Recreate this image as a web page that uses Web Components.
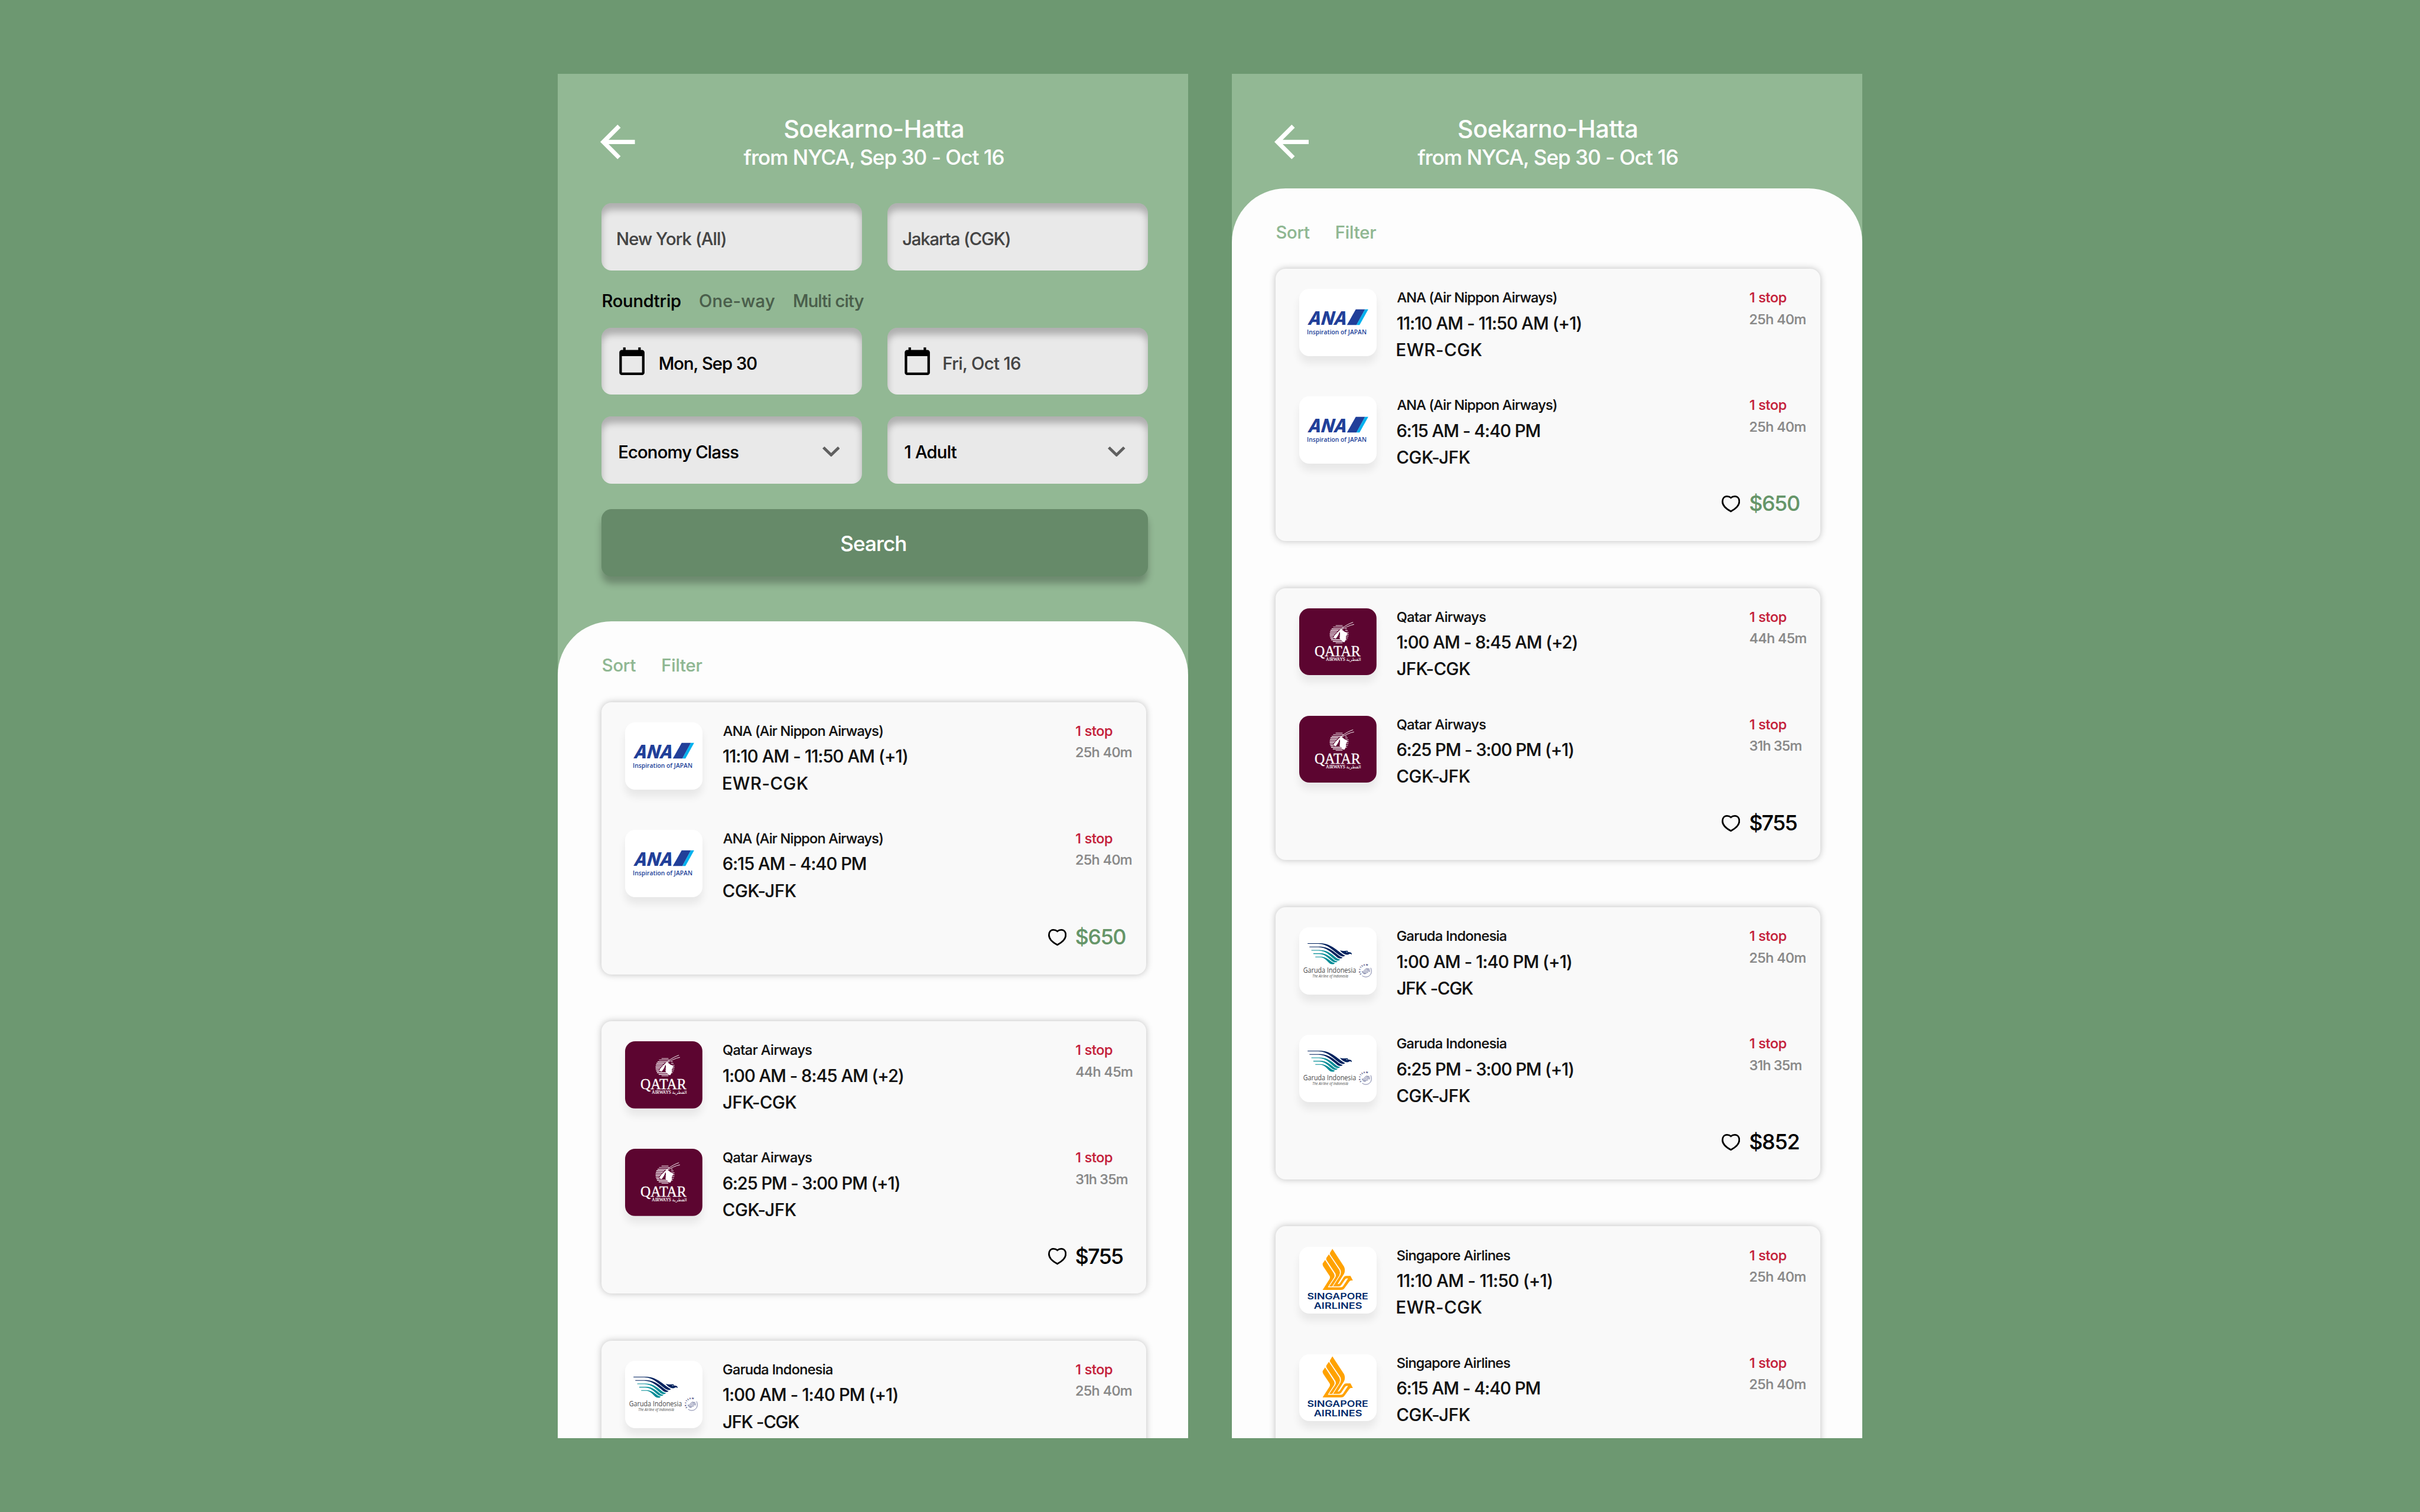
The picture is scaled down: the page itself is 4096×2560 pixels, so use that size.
<!DOCTYPE html>
<html lang="en">
<head>
<meta charset="utf-8">
<title>Flight search</title>
<style>
  :root { --u: calc(100vw / 1440); }
  html, body { margin: 0; height: 100%; }
  body {
    background: #6d9871;
    font-family: Inter, "Liberation Sans", sans-serif;
    font-weight: 500;
    display: flex; align-items: center; justify-content: center;
    gap: calc(var(--u) * 26);
    height: 100vh; overflow: hidden;
  }
</style>
</head>
<body>
<phone-screen>
  <top-bar></top-bar>
  <search-form></search-form>
  <results-sheet count="3" last-legs="1"></results-sheet>
</phone-screen>
<phone-screen>
  <top-bar></top-bar>
  <results-sheet count="4" last-legs="2"></results-sheet>
</phone-screen>

<script>
// Lengths written as "12u" are design units: 1/1440 of the window's width.
const U = window.innerWidth / 1440;
const css = s => '<style>' + s.replace(/(-?[\d.]+)u\b/g, 'calc(var(--u) * $1)') + '</style>';
class Base extends HTMLElement {
  connectedCallback() {
    if (this.shadowRoot) return;
    this.attachShadow({ mode: 'open' }).innerHTML = this.render();
  }
}
const pen = document.createElement('canvas').getContext('2d');

// One line of text: s = font size, w = inked width, b = baseline from the top, h = box height.
customElements.define('fit-text', class extends Base {
  render() {
    const s = +this.getAttribute('s'), w = +this.getAttribute('w'), b = +this.getAttribute('b');
    const h = this.getAttribute('h') || b;
    const t = this.textContent;
    pen.font = '500 100px Inter, "Liberation Sans", sans-serif';
    const m = pen.measureText(t), k = s * U / 100;
    const ink = (m.actualBoundingBoxLeft + m.actualBoundingBoxRight) * k;
    const ls = (w * U - ink) / (t.length - 1);
    return css(`:host{display:block;width:${w}u;height:${h}u;flex:none;font-size:${s}u;
      line-height:${(2 * (b - 0.3636 * s)).toFixed(3)}u;white-space:nowrap;
      letter-spacing:${ls.toFixed(3)}px;-webkit-text-stroke:.07u currentColor}
      span{margin-left:${(m.actualBoundingBoxLeft * k + 0.1 * U).toFixed(2)}px}`) + '<span><slot></slot></span>';
  }
});

customElements.define('phone-screen', class extends Base {
  render() {
    return css(`:host{display:flex;flex-direction:column;width:375u;height:812u;background:#92b894;overflow:hidden}`) + '<slot></slot>';
  }
});

customElements.define('top-bar', class extends Base {
  render() {
    return css(`:host{display:flex;height:68u;flex:none;color:#fdfdfd}
      svg{width:20.6u;height:20.6u;margin:30.2u 0 0 25.2u;flex:none}
      .t{display:flex;flex-direction:column;align-items:center;width:155u;margin-left:64.6u}`) +
      `<svg viewBox="4 4 16 16" fill="#fff"><path d="M20 11H7.83l5.59-5.59L12 4l-8 8 8 8 1.41-1.41L7.83 13H20v-2z"/></svg>
      <div class="t"><fit-text s="14.4" w="105.9" b="38.2" h="40">Soekarno-Hatta</fit-text>
      <fit-text s="12.3" w="154.9" b="14" h="16">from NYCA, Sep 30 - Oct 16</fit-text></div>`;
  }
});

customElements.define('field-box', class extends Base {
  render() {
    const k = this.getAttribute('kind');
    const cal = '<svg class="cal" viewBox="0 0 24 24"><path d="M20 3h-1V1h-2v2H7V1H5v2H4c-1.1 0-2 .9-2 2v16c0 1.1.9 2 2 2h16c1.1 0 2-.9 2-2V5c0-1.1-.9-2-2-2zm0 18H4V8h16v13z"/></svg>';
    const chev = '<svg class="chev" viewBox="6 8.59 12 7.41" preserveAspectRatio="none"><path fill="#606060" d="M16.59 8.59L12 13.17 7.41 8.59 6 10l6 6 6-6z"/></svg>';
    return css(`:host{display:flex;box-sizing:border-box;width:155u;height:40u;border-radius:6u;background:#e9e9e9;
        box-shadow:inset 0 4u 4u rgba(0,0,0,.25);padding-left:${this.getAttribute('pad')}u;color:#000}
      :host([muted]){color:#444}
      .cal{width:18u;height:18u;margin:11.1u ${this.getAttribute('gap') || 0}u 0 0;flex:none}
      .chev{width:10.4u;height:6.2u;margin:17.7u 13.3u 0 auto;flex:none}`) +
      (k === 'date' ? cal : '') + '<slot></slot>' + (k === 'select' ? chev : '');
  }
});

customElements.define('search-form', class extends Base {
  render() {
    return css(`:host{display:block;padding:9u 24u 27u 26u;flex:none}
      .row{display:flex;gap:15u}
      .row+.row{margin-top:13u}
      .tabs{display:flex;height:34u;padding-left:.8u;color:#4a5e4b}
      .tabs fit-text:first-child{color:#000;margin-right:11.4u}
      .tabs fit-text:nth-child(2){margin-right:11.6u}
      .go{display:flex;height:40u;margin-top:15u;border-radius:6u;background:#668a69;
        color:#fff;box-shadow:0 4u 4u rgba(0,0,0,.25);padding-left:142.5u;box-sizing:border-box}`) + `
      <div class="row">
        <field-box pad="9.4" muted><fit-text s="10.25" w="64.2" b="25.1">New York (All)</fit-text></field-box>
        <field-box pad="9.2" muted><fit-text s="10.25" w="63.5" b="25.1">Jakarta (CGK)</fit-text></field-box>
      </div>
      <div class="tabs"><fit-text s="10.25" w="46.1" b="22.1">Roundtrip</fit-text><fit-text s="10.25" w="44.6" b="22.1">One-way</fit-text><fit-text s="10.25" w="41.4" b="22.1">Multi city</fit-text></div>
      <div class="row">
        <field-box kind="date" pad="9" gap="7.6"><fit-text s="10.25" w="57.7" b="25.1">Mon, Sep 30</fit-text></field-box>
        <field-box kind="date" pad="8.9" gap="6.7" muted><fit-text s="10.25" w="45.6" b="25.1">Fri, Oct 16</fit-text></field-box>
      </div>
      <div class="row">
        <field-box kind="select" pad="10.5"><fit-text s="10.25" w="70.8" b="25.1">Economy Class</fit-text></field-box>
        <field-box kind="select" pad="10.4"><fit-text s="10.25" w="30.8" b="25.1">1 Adult</fit-text></field-box>
      </div>
      <div class="go"><fit-text s="12.3" w="38.3" b="25">Search</fit-text></div>`;
  }
});

const LOGOS = {
  ana: `<svg viewBox="54 60 552 480"><g fill="#213f99">
      <text transform="translate(111 318) skewX(-16)" font-family="Inter" font-weight="800" font-size="133" textLength="275" lengthAdjust="spacingAndGlyphs">ANA</text>
      <path d="M395 318L458 207H524L463 318z"/>
      <text x="109" y="386" font-family="Open Sans" font-weight="600" font-size="47" textLength="426" lengthAdjust="spacingAndGlyphs">Inspiration of JAPAN</text></g>
      <path fill="#00b1ee" d="M463 318L524 207H547L485 318z"/></svg>`,
  qatar: `<svg viewBox="54 60 552 480"><rect x="54" y="60" width="552" height="480" fill="#5c0530"/>
      <g stroke="#fff" stroke-width="6" stroke-linecap="round">
      <path stroke-width="4" d="M316 183H362M298 194H370"/><path d="M288 206H358M280 217H346M276 229H336M274 240H326M274 251H312M275 262H300M279 273H296M284 285H364M296 296H368"/><path stroke-width="4" d="M316 307H362"/>
      <path stroke-width="4" d="M384 206H392M384 218H398M378 232H405M378 245H406M372 258H404M372 271H400M372 284H394"/></g>
      <path fill="#5c0530" d="M294 262L336 214L352 214L340 268L318 278z"/>
      <path fill="#fff" d="M343 217C352 208 362 212 372 222C384 232 396 236 402 243C388 252 386 262 388 278C386 290 380 297 374 304C364 292 350 290 342 272C346 254 350 240 338 232L346 246C344 262 328 262 318 274C312 279 304 275 298 268C308 246 330 230 343 217z"/>
      <path fill="#5c0530" d="M341 228C350 240 345 254 334 263C326 268 322 272 318 276C324 262 338 250 341 228z"/>
      <path fill="none" stroke="#fff" stroke-width="4" stroke-linecap="round" d="M318 244C350 206 390 176 437 160M352 214C385 196 415 180 444 175"/>
      <g fill="#fff" font-family="Liberation Serif">
      <text x="164" y="401" font-size="103" stroke="#fff" stroke-width="1.5" textLength="328" lengthAdjust="spacingAndGlyphs">QATAR</text>
      <text x="245" y="436" font-size="34" stroke="#fff" stroke-width=".7" textLength="138" lengthAdjust="spacingAndGlyphs">AIRWAYS</text>
      <text x="389" y="434" font-family="DejaVu Sans" font-size="30" textLength="107" lengthAdjust="spacingAndGlyphs">القطرية</text></g></svg>`,
  garuda: `<svg viewBox="36 54 552 480"><g fill="#02235f">
      <path d="M96 168H178C262 168 296 214 350 249L364 257C356 265 343 265 328 257C272 218 240 174 172 172.500H96z"/>
      <path d="M109 192H178C256 192 292 238 330 264L346 270C338 279 323 279 309 270C262 232 232 198 172 196.500H109z"/>
      <path d="M326 217C340 224 360 223 382 222L385 231C405 231 413 237 411 249C406 244 400 243 394 245C384 252 372 251 360 246C345 238 336 232 326 217z"/></g>
      <path fill="#fff" d="M370 228L383 231L374 234z"/>
      <g fill="#008c96">
      <path d="M123 216H180C245 216 278 256 312 280L328 285C320 294 305 294 291 286C250 252 228 222 175 220.500H123z"/>
      <path d="M137 240H184C237 240 262 273 293 293L310 298C302 307 286 306 274 299C240 272 222 246 180 244.500H137z"/>
      <path d="M151 264H188C226 264 248 288 275 305L291 310C283 320 267 320 254 312C228 290 216 270 186 268.500H151z"/></g>
      <text x="64" y="380" fill="#484848" font-family="Open Sans" font-weight="500" font-size="52" textLength="378" lengthAdjust="spacingAndGlyphs">Garuda Indonesia</text>
      <text x="130" y="414" fill="#484848" font-family="Open Sans" font-style="italic" font-weight="500" font-size="31" textLength="256" lengthAdjust="spacingAndGlyphs">The Airline of Indonesia</text>
      <g fill="none" stroke="#1d2766" stroke-width="3" stroke-linecap="round">
      <path d="M547 345C563 378 542 408 513 409C503 409 494 406 487 401" stroke-width="2.5"/>
      <path d="M484 371C500 374 502 356 514 350C522 347 528 354 536 351M488 378C506 380 506 362 518 358C526 355 532 363 540 360M494 385C510 384 510 370 522 367C530 365 534 371 541 369M502 387C514 386 516 377 526 376"/></g>
      <path id="arc" fill="none" d="M481 389A38 38 0 1 1 545 349"/>
      <text fill="#1d2766" font-family="Inter" font-weight="700" font-size="15"><textPath href="#arc" textLength="100" lengthAdjust="spacing">SKYTEAM</textPath></text></svg>`,
  singapore: `<svg viewBox="36 54 552 480"><g fill="#ffa200">
      <path d="M273 69L256 96Q253 104 258 111L329 215Q338 235 330 255L278 337H318Q330 337 337 326L362 289Q368 280 376 280H385L350 333Q344 343 334 343H240L286 272Q292 260 284 245L221 148L204 172Q201 183 208 194L253 262Q259 272 253 284L203 362H335Q352 362 361 347L394 302Q399 294 406 294H419L402 262H372Q360 262 353 272L327 312Q322 322 310 321L356 247Q368 220 356 195z"/>
      <path d="M248 108L230 133Q227 143 231 149L295 246Q300 260 294 271L250 337H272L323 258Q331 240 324 222z"/></g>
      <g fill="#002a6c" font-family="Inter" font-weight="600" font-size="62">
      <text x="93" y="429" textLength="436" lengthAdjust="spacingAndGlyphs">SINGAPORE</text>
      <text x="140" y="497" textLength="346" lengthAdjust="spacingAndGlyphs">AIRLINES</text></g></svg>`
};

customElements.define('airline-logo', class extends Base {
  render() {
    return css(`:host{display:block;width:46u;height:40u;flex:none;border-radius:6u;background:#fff;box-shadow:0 4u 5u rgba(0,0,0,.07)}
      svg{display:block;width:100%;height:100%;border-radius:6u}`) + LOGOS[this.getAttribute('name')];
  }
});

const FLIGHTS = [
  { logo: 'ana', name: ['ANA (Air Nippon Airways)', 94.8], price: ['$650', 29.3], deal: true, legs: [
    [['11:10 AM - 11:50 AM (+1)', 109.3], ['EWR-CGK', 50.4], ['25h 40m', 33]],
    [['6:15 AM - 4:40 PM', 84.8], ['CGK-JFK', 43.4], ['25h 40m', 33]]] },
  { logo: 'qatar', name: ['Qatar Airways', 52.7], price: ['$755', 27.7], legs: [
    [['1:00 AM - 8:45 AM (+2)', 106.9], ['JFK-CGK', 43.5], ['44h 45m', 33.4]],
    [['6:25 PM - 3:00 PM (+1)', 104.6], ['CGK-JFK', 43.4], ['31h 35m', 30.5]]] },
  { logo: 'garuda', name: ['Garuda Indonesia', 64.9], price: ['$852', 29], legs: [
    [['1:00 AM - 1:40 PM (+1)', 103.5], ['JFK -CGK', 45.2], ['25h 40m', 33]],
    [['6:25 PM - 3:00 PM (+1)', 104.6], ['CGK-JFK', 43.4], ['31h 35m', 30.5]]] },
  { logo: 'singapore', name: ['Singapore Airlines', 67.2], legs: [
    [['11:10 AM - 11:50 (+1)', 91.9], ['EWR-CGK', 50.4], ['25h 40m', 33]],
    [['6:15 AM - 4:40 PM', 84.8], ['CGK-JFK', 43.4], ['25h 40m', 33]]] }
];
const line = ([t, w], s, b, h, c = '') => `<fit-text class="${c}" s="${s}" w="${w}" b="${b}" h="${h}">${t}</fit-text>`;

customElements.define('flight-leg', class extends Base {
  render() {
    const f = FLIGHTS[this.getAttribute('flight')], [time, route, dur] = f.legs[this.getAttribute('leg')];
    return css(`:host{display:flex;height:64u;color:#111}
      .mid{width:209.9u;margin-left:12.3u}
      .stop{color:#c41e3a}.dur{color:#888}`) +
      `<airline-logo name="${f.logo}"></airline-logo>
      <div class="mid">${line(f.name, 8.25, 8.2, 10)}${line(time, 10.25, 14.25, 18)}${line(route, 10.25, 12.1, 14)}</div>
      <div>${line(['1 stop', 21.6], 8.25, 8.2, 10, 'stop')}${line(dur, 8.25, 11.2, 12, 'dur')}</div>`;
  }
});

customElements.define('flight-card', class extends Base {
  render() {
    const i = this.getAttribute('flight'), n = +this.getAttribute('legs'), f = FLIGHTS[i];
    let legs = '';
    for (let k = 0; k < n; k++) legs += `<flight-leg flight="${i}" leg="${k}"></flight-leg>`;
    const price = f.price && n > 1 ? `<div class="price"><svg viewBox="0 0 132 120"><path fill="none" stroke="#000" stroke-width="12" d="M66 16C57 8 47 6 38 6C18 6 6 22 6 43C6 72 34 96 66 113C98 96 126 72 126 43C126 22 114 6 94 6C85 6 75 8 66 16z"/></svg>${line(f.price, 12.5, 4.1, 5)}</div>` : '';
    return css(`:host{display:block;box-sizing:border-box;width:324u;height:162u;flex:none;border-radius:6u;background:#f9f9f9;
        box-shadow:0 0 4u rgba(0,0,0,.25);padding:12u 0 0 14u}
      .price{display:flex;padding-left:251.5u;color:${f.deal ? '#659568' : '#000'}}
      svg{width:11u;height:10u;margin:-5u 5.8u 0 0;flex:none}`) + legs + price;
  }
});

customElements.define('results-sheet', class extends Base {
  render() {
    const n = +this.getAttribute('count');
    let cards = '';
    for (let i = 0; i < n; i++) cards += `<flight-card flight="${i}" legs="${i === n - 1 ? this.getAttribute('last-legs') : 2}"></flight-card>`;
    return css(`:host{display:flex;flex-direction:column;flex:1;min-height:0;background:#fdfdfd;border-radius:32u 32u 0 0;
        padding-left:26u;overflow:hidden}
      .bar{display:flex;height:48u;flex:none;gap:16u;padding-left:.6u;color:#8fb792}
      .list{display:flex;flex-direction:column;gap:28u;min-height:0}`) +
      `<div class="bar"><fit-text s="10.25" w="19.6" b="30.2">Sort</fit-text><fit-text s="10.25" w="23.5" b="30.2">Filter</fit-text></div>
      <div class="list">${cards}</div>`;
  }
});
</script>
</body>
</html>
